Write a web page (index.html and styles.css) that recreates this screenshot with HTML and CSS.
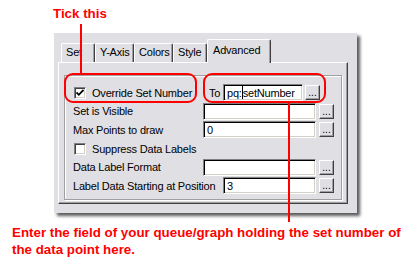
FILE: index.html
```html
<!DOCTYPE html>
<html>
<head>
<meta charset="utf-8">
<link rel="stylesheet" href="styles.css">
</head>
<body>
<div class="note note-top">Tick this</div>
<div class="dialog">
  <div class="tabs">
    <div class="tab w34">Set</div>
    <div class="tab w39">Y-Axis</div>
    <div class="tab w39">Colors</div>
    <div class="tab w34">Style</div>
    <div class="tab tab-active">Advanced</div>
  </div>
  <div class="page">
    <div class="group">
      <div class="row">
        <div class="checkline lbl-130">
          <span class="checkbox"><svg width="8" height="8" viewBox="0 0 8 8"><path d="M0.5 3.5 L2.8 5.8 L7.5 1" fill="none" stroke="#000" stroke-width="1.8"/></svg></span>
          <span>Override Set Number</span>
        </div>
        <span class="to">To</span>
        <div class="field w80">pq:<span class="caret"></span>setNumber</div>
        <div class="btn">...</div>
      </div>
      <div class="row">
        <span class="lbl-130">Set is Visible</span>
        <div class="field w113"></div>
        <div class="btn">...</div>
      </div>
      <div class="row">
        <span class="lbl-130">Max Points to draw</span>
        <div class="field w113">0</div>
        <div class="btn">...</div>
      </div>
      <div class="row">
        <div class="checkline">
          <span class="checkbox"></span>
          <span>Suppress Data Labels</span>
        </div>
      </div>
      <div class="row">
        <span class="lbl-130">Data Label Format</span>
        <div class="field w113"></div>
        <div class="btn">...</div>
      </div>
      <div class="row">
        <span class="lbl-150">Label Data Starting at Position</span>
        <div class="field w93">3</div>
        <div class="btn">...</div>
      </div>
    </div>
  </div>
</div>
<div class="note note-bottom">Enter the field of your queue/graph holding the set number of<br>the data point here.</div>

<div class="mark line1"></div>
<div class="mark box1"></div>
<div class="mark box2"></div>
<div class="mark line2"></div>
</body>
</html>
```

FILE: styles.css
```css
html, body {
  margin: 0;
  padding: 0;
}
body {
  position: relative;
  width: 419px;
  height: 268px;
  overflow: hidden;
  background: #fff;
  font-family: "Liberation Sans", Arial, sans-serif;
}
.note {
  color: #ff0000;
  font-weight: bold;
  font-size: 13.33px;
  line-height: 17px;
}
.note-top {
  box-sizing: border-box;
  height: 33px;
  padding: 5px 0 0 53px;
}
.note-bottom {
  margin-top: 11px;
  padding-left: 12px;
}
.dialog {
  box-sizing: border-box;
  margin-left: 54px;
  width: 303px;
  height: 180px;
  background: #e0dfe3;
  box-shadow: 3px 3px 3px rgba(0,0,0,0.65);
  padding: 6px 0 0 4px;
  font-size: 11px;
  letter-spacing: -0.2px;
  color: #000;
}
.tabs {
  display: flex;
  align-items: flex-end;
  height: 23px;
  padding-left: 3px;
}
.tab {
  box-sizing: border-box;
  height: 19px;
  padding: 2px 0 0 4px;
  line-height: 13px;
  border-top: 1px solid #fff;
  border-left: 1px solid #fff;
  border-right: 1px solid #404040;
  border-radius: 2px 2px 0 0;
  box-shadow: inset -1px 0 #a0a0a0;
  white-space: nowrap;
}
.w34 { width: 34px; }
.w39 { width: 39px; }
.tab-active {
  position: relative;
  width: 64px;
  height: 24px;
  margin-bottom: -1px;
  padding: 4px 0 0 5px;
  background: #e0dfe3;
}
.page {
  box-sizing: border-box;
  width: 290px;
  height: 142px;
  border-top: 1px solid #fff;
  border-left: 1px solid #fff;
  border-right: 1px solid #404040;
  border-bottom: 1px solid #404040;
  box-shadow: inset -1px -1px #a0a0a0;
  padding: 12px 0 0 5px;
}
.group {
  box-sizing: border-box;
  width: 278px;
  height: 125px;
  border: 1px solid #a0a0a0;
  box-shadow: inset 1px 1px #fff, 1px 1px #fff;
  padding: 8px 0 0 8px;
  display: flex;
  flex-direction: column;
  gap: 1.7px;
}
.row {
  display: flex;
  align-items: center;
  height: 17px;
  white-space: nowrap;
}
.lbl-130 { width: 130px; flex: none; }
.lbl-150 { width: 150px; flex: none; }
.checkline {
  display: flex;
  align-items: center;
  gap: 6px;
  padding-left: 1px;
}
.checkline.lbl-130 { width: 129px; }
.checkbox {
  box-sizing: border-box;
  width: 12px;
  height: 12px;
  background: #fff;
  border-top: 1px solid #808080;
  border-left: 1px solid #808080;
  border-right: 1px solid #fff;
  border-bottom: 1px solid #fff;
  box-shadow: inset 1px 1px #404040, inset -1px -1px #d4d0c8;
  display: flex;
  align-items: center;
  justify-content: center;
}
.to {
  width: 14px;
  margin-left: 6px;
  flex: none;
}
.field {
  box-sizing: border-box;
  height: 17px;
  background: #fff;
  border-top: 1px solid #808080;
  border-left: 1px solid #808080;
  border-right: 1px solid #fff;
  border-bottom: 1px solid #fff;
  box-shadow: inset 1px 1px #000, inset -1px -1px #d4d0c8;
  padding: 1px 0 0 3px;
  line-height: 14px;
  font-size: 11px;
  flex: none;
}
.caret {
  display: inline-block;
  width: 1px;
  height: 13px;
  vertical-align: -2px;
  background: #000;
}
.w80 { width: 80px; }
.w113 { width: 113px; }
.w93 { width: 93px; }
.btn {
  box-sizing: border-box;
  width: 15px;
  height: 15px;
  margin-left: 3px;
  background: #e0dfe3;
  border-top: 1px solid #fff;
  border-left: 1px solid #fff;
  border-right: 1px solid #404040;
  border-bottom: 1px solid #404040;
  box-shadow: inset -1px -1px #a0a0a0;
  font-size: 10px;
  line-height: 14px;
  text-align: center;
  letter-spacing: 0;
  flex: none;
}
.field.w80 + .btn { margin-left: 2px; }
.mark {
  position: absolute;
  box-sizing: border-box;
}
.line1 {
  left: 80px;
  top: 24px;
  width: 2px;
  height: 50px;
  background: #ff0000;
}
.line2 {
  left: 288px;
  top: 102px;
  width: 2px;
  height: 120px;
  background: #ff0000;
}
.box1 {
  left: 64px;
  top: 73px;
  width: 133px;
  height: 30px;
  border: 2px solid #ff0000;
  border-radius: 9px;
}
.box2 {
  left: 203px;
  top: 73px;
  width: 123px;
  height: 30px;
  border: 2px solid #ff0000;
  border-radius: 9px;
}
```
